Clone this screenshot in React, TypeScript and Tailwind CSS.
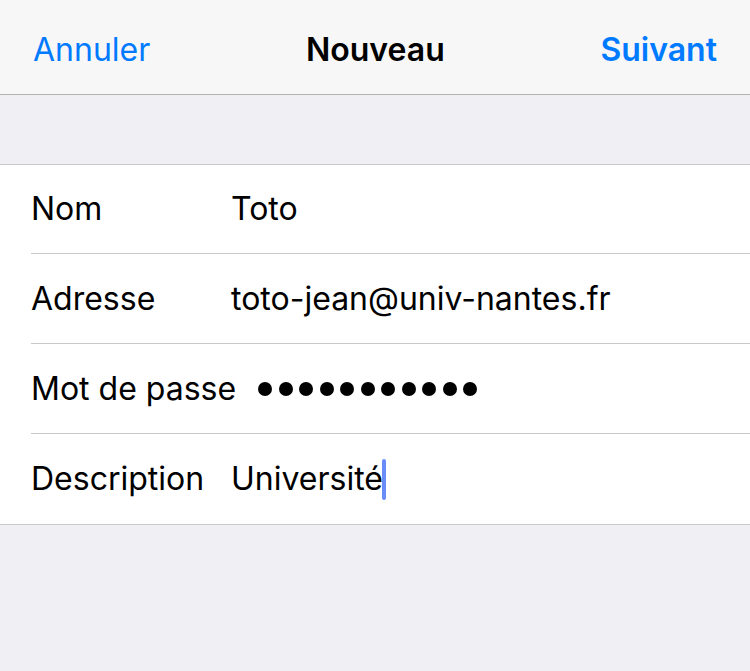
import React from "react";

const rows = [
  { label: "Nom", value: "Toto" },
  { label: "Adresse", value: "toto-jean@univ-nantes.fr" },
  { label: "Mot de passe", value: "", password: true },
  { label: "Description", value: "Université", cursor: true },
];

export default function App() {
  return (
    <div
      className="w-[750px] h-[671px] bg-[#efeff4] flex flex-col"
      style={{ fontFamily: "Inter, 'Noto Sans', sans-serif" }}
    >
      <div className="h-[95px] bg-[#f7f7f8] border-b border-[#b2b2b2] flex items-center justify-between pl-[33px] pr-[33px] pt-[6px]">
        <span className="text-[32px] text-[#007aff]">Annuler</span>
        <span className="text-[32px] font-semibold text-black">Nouveau</span>
        <span className="text-[32px] font-semibold text-[#007aff]">Suivant</span>
      </div>
      <div className="h-[69px]" />
      <div className="bg-white border-t border-b border-[#c8c7cc]">
        {rows.map((r, i) => (
          <div key={i} className="pl-[31px]">
            <div
              className={`flex items-center ${i < rows.length - 1 ? "border-b border-[#c8c7cc]" : ""} ${i === 0 ? "h-[89px]" : "h-[90px]"}`}
            >
              <span className="min-w-[200px] pr-[22px] shrink-0 text-[32px] text-black">
                {r.label}
              </span>
              {r.password ? (
                <div className="flex items-center gap-[6.5px]">
                  {Array.from({ length: 11 }).map((_, k) => (
                    <span key={k} className="w-[14px] h-[14px] rounded-full bg-black" />
                  ))}
                </div>
              ) : (
                <span className="text-[32px] text-black flex items-center">
                  {r.value}
                  {r.cursor && <span className="inline-block w-[4px] h-[41px] bg-[#6a8cf8] rounded-[2px] ml-[-1px]" />}
                </span>
              )}
            </div>
          </div>
        ))}
      </div>
    </div>
  );
}
